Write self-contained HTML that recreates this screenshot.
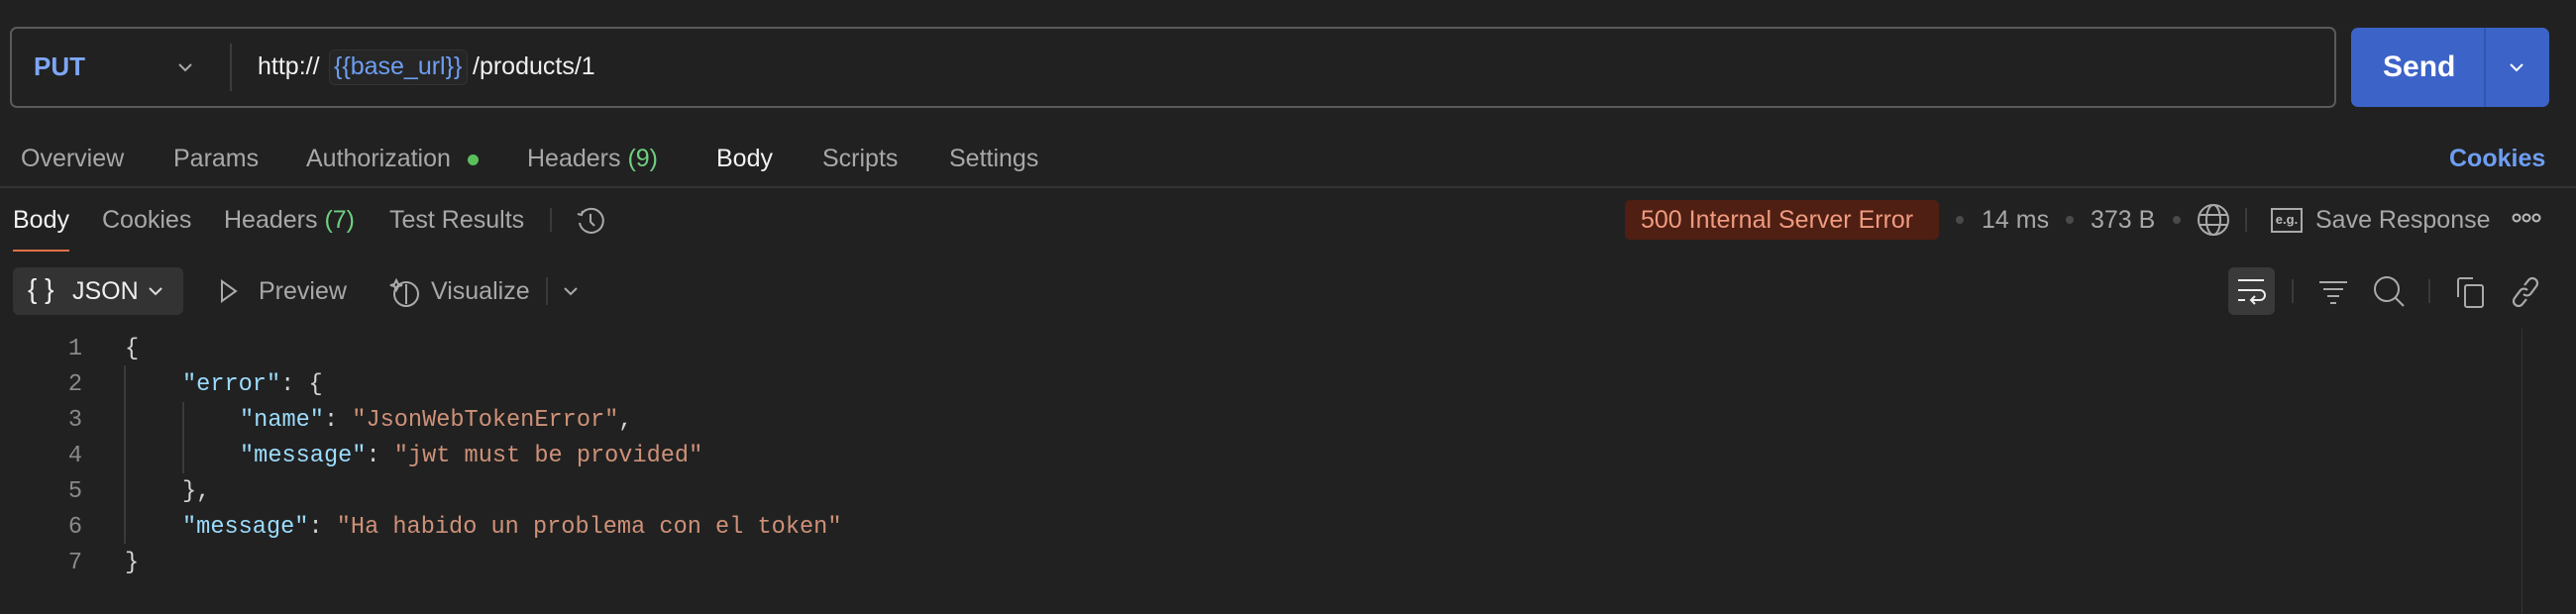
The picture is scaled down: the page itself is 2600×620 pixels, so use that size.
<!DOCTYPE html>
<html><head><meta charset="utf-8"><style>
*{margin:0;padding:0;box-sizing:border-box}
body{width:2600px;height:620px;background:#212121;position:relative;overflow:hidden;font-family:"Liberation Sans",sans-serif;color:#a8a8a8}
.a{position:absolute;white-space:nowrap}
.t{font-size:25px;line-height:30px}
.mono{font-family:"Liberation Mono",monospace;font-size:23.6px;line-height:36px}
.k{color:#9cdcfe}.s{color:#ce9178}.p{color:#d4d4d4}
.ln{color:#8a8a8a;width:30px;text-align:right;left:53px}
svg{position:absolute}
</style></head><body>
<div class="a" style="left:10px;top:27px;width:2348px;height:82px;border:2px solid #5a5a5a;border-radius:7px"></div>
<div class="a" style="left:34px;top:52px;font-size:26px;font-weight:bold;color:#7ea6f5">PUT</div>
<svg style="left:178px;top:62px" width="18" height="12" viewBox="0 0 18 12"><path d="M3 3l6 6 6-6" stroke="#aaa" stroke-width="2" fill="none"/></svg>
<div class="a" style="left:232px;top:44px;width:2px;height:48px;background:#3c3c3c"></div>
<div class="a" style="left:260px;top:53px;font-size:25px;color:#f0f0f0">http://</div>
<div class="a" style="left:332px;top:50px;width:140px;height:36px;background:#262626;border:1px solid #333;border-radius:6px"></div>
<div class="a" style="left:337px;top:53px;font-size:25px;color:#6e9ef2">{{base_url}}</div>
<div class="a" style="left:477px;top:53px;font-size:25px;color:#f0f0f0">/products/1</div>
<div class="a" style="left:2373px;top:28px;width:200px;height:80px;background:#3c63c8;border-radius:7px"></div>
<div class="a" style="left:2507px;top:28px;width:2px;height:80px;background:#3055b0"></div>
<div class="a" style="left:2405px;top:51px;font-size:30px;font-weight:bold;color:#fff">Send</div>
<svg style="left:2531px;top:62px" width="18" height="12" viewBox="0 0 18 12"><path d="M3 3l6 6 6-6" stroke="#fff" stroke-width="2" fill="none"/></svg>
<div class="a t" style="left:21px;top:145px">Overview</div>
<div class="a t" style="left:175px;top:145px">Params</div>
<div class="a t" style="left:309px;top:145px">Authorization</div>
<div class="a" style="left:472px;top:156px;width:11px;height:11px;border-radius:50%;background:#5bbf5b"></div>
<div class="a t" style="left:532px;top:145px">Headers <span style="color:#6fcf7f">(9)</span></div>
<div class="a t" style="left:723px;top:145px;color:#f2f2f2">Body</div>
<div class="a t" style="left:830px;top:145px">Scripts</div>
<div class="a t" style="left:958px;top:145px">Settings</div>
<div class="a t" style="left:2472px;top:145px;color:#6e9ef2;font-weight:bold">Cookies</div>
<div class="a" style="left:0;top:188px;width:2600px;height:2px;background:#333"></div>
<div class="a t" style="left:13px;top:207px;color:#f2f2f2">Body</div>
<div class="a" style="left:13px;top:252px;width:57px;height:2px;background:#e0714a"></div>
<div class="a t" style="left:103px;top:207px">Cookies</div>
<div class="a t" style="left:226px;top:207px">Headers <span style="color:#6fcf7f">(7)</span></div>
<div class="a t" style="left:393px;top:207px">Test Results</div>
<div class="a" style="left:555px;top:210px;width:2px;height:24px;background:#3a3a3a"></div>
<svg style="left:580px;top:207px" width="32" height="32" viewBox="0 0 32 32" fill="none" stroke="#aaa" stroke-width="2"><path d="M7 9A12 12 0 1 1 5 18"/><path d="M3 9l4 1 1-4"/><path d="M16 9v8l4 4"/></svg>
<div class="a" style="left:1640px;top:202px;width:317px;height:40px;background:#4e1f12;border-radius:5px"></div>
<div class="a t" style="left:1656px;top:207px;color:#f09a80">500 Internal Server Error</div>
<div class="a" style="left:1974px;top:218px;width:8px;height:8px;border-radius:50%;background:#4a4a4a"></div>
<div class="a t" style="left:2000px;top:207px">14 ms</div>
<div class="a" style="left:2085px;top:218px;width:8px;height:8px;border-radius:50%;background:#4a4a4a"></div>
<div class="a t" style="left:2110px;top:207px">373 B</div>
<div class="a" style="left:2193px;top:218px;width:8px;height:8px;border-radius:50%;background:#4a4a4a"></div>
<svg style="left:2217px;top:205px" width="34" height="34" viewBox="0 0 34 34" fill="none" stroke="#aaa" stroke-width="2"><circle cx="17" cy="17" r="15"/><ellipse cx="17" cy="17" rx="7" ry="15"/><path d="M3 12h28M3 22h28"/></svg>
<div class="a" style="left:2266px;top:210px;width:2px;height:24px;background:#3a3a3a"></div>
<div class="a" style="left:2292px;top:210px;width:32px;height:25px;border:2px solid #aaa;font-size:13px;font-weight:bold;color:#bbb;text-align:center;line-height:20px">e.g.</div>
<div class="a t" style="left:2337px;top:207px">Save Response</div>
<svg style="left:2535px;top:214px" width="30" height="12" viewBox="0 0 30 12" fill="none" stroke="#bbb" stroke-width="2"><circle cx="5" cy="6" r="3.5"/><circle cx="15" cy="6" r="3.5"/><circle cx="25" cy="6" r="3.5"/></svg>
<div class="a" style="left:13px;top:270px;width:172px;height:48px;background:#333;border-radius:6px"></div>
<div class="a" style="left:28px;top:276px;font-size:28px;color:#eee">{ }</div>
<div class="a t" style="left:73px;top:279px;color:#eee">JSON</div>
<svg style="left:148px;top:288px" width="18" height="12" viewBox="0 0 18 12"><path d="M3 3l6 6 6-6" stroke="#ddd" stroke-width="2" fill="none"/></svg>
<svg style="left:221px;top:281px" width="20" height="26" viewBox="0 0 20 26"><path d="M3 3l14 10L3 23z" stroke="#aaa" stroke-width="2" fill="none"/></svg>
<div class="a t" style="left:261px;top:279px">Preview</div>
<svg style="left:392px;top:279px" width="32" height="32" viewBox="0 0 32 32" fill="none" stroke="#aaa" stroke-width="2"><circle cx="18" cy="18" r="12"/><path d="M18 8v20M8 4l2 4 4 1-4 1-2 4-2-4-4-1 4-1z"/></svg>
<div class="a t" style="left:435px;top:279px">Visualize</div>
<div class="a" style="left:551px;top:280px;width:2px;height:28px;background:#3a3a3a"></div>
<svg style="left:567px;top:288px" width="18" height="12" viewBox="0 0 18 12"><path d="M3 3l6 6 6-6" stroke="#aaa" stroke-width="2" fill="none"/></svg>
<div class="a" style="left:2249px;top:270px;width:47px;height:48px;background:#3a3a3a;border-radius:6px"></div>
<svg style="left:2257px;top:280px" width="32" height="30" viewBox="0 0 32 30" fill="none" stroke="#eee" stroke-width="2"><path d="M2 3h26M2 13h22a5 5 0 0 1 0 10h-9M19 19l-4 4 4 4M2 23h7"/></svg>
<div class="a" style="left:2313px;top:282px;width:2px;height:24px;background:#3a3a3a"></div>
<svg style="left:2340px;top:282px" width="30" height="26" viewBox="0 0 30 26" fill="none" stroke="#aaa" stroke-width="2"><path d="M1 3h28M5 10h20M9 17h12M12 24h6"/></svg>
<svg style="left:2395px;top:278px" width="34" height="34" viewBox="0 0 34 34" fill="none" stroke="#aaa" stroke-width="2"><circle cx="14" cy="14" r="12"/><path d="M23 23l8 8"/></svg>
<div class="a" style="left:2451px;top:282px;width:2px;height:24px;background:#3a3a3a"></div>
<svg style="left:2478px;top:278px" width="32" height="34" viewBox="0 0 32 34" fill="none" stroke="#aaa" stroke-width="2"><path d="M3 22V5a2 2 0 0 1 2-2h13"/><rect x="10" y="10" width="18" height="22" rx="2"/></svg>
<svg style="left:2533px;top:278px" width="32" height="34" viewBox="0 0 32 34" fill="none" stroke="#aaa" stroke-width="2.2"><path d="M15 10l4-5a5 5 0 0 1 8 6l-6 8a5 5 0 0 1-7 0M17 24l-4 5a5 5 0 0 1-8-6l6-8a5 5 0 0 1 7 0"/></svg>
<div class="a" style="left:125px;top:369px;width:2px;height:180px;background:#3a3a3a"></div>
<div class="a" style="left:184px;top:406px;width:2px;height:72px;background:#3a3a3a"></div>
<div class="a" style="left:2545px;top:332px;width:1px;height:288px;background:#333"></div>
<div class="a mono ln" style="top:335px">1</div>
<div class="a mono ln" style="top:371px">2</div>
<div class="a mono ln" style="top:407px">3</div>
<div class="a mono ln" style="top:443px">4</div>
<div class="a mono ln" style="top:479px">5</div>
<div class="a mono ln" style="top:515px">6</div>
<div class="a mono ln" style="top:551px">7</div>
<div class="a mono p" style="left:126px;top:335px">{</div>
<div class="a mono p" style="left:184px;top:371px"><span class="k">"error"</span>: {</div>
<div class="a mono p" style="left:242px;top:407px"><span class="k">"name"</span>: <span class="s">"JsonWebTokenError"</span>,</div>
<div class="a mono p" style="left:242px;top:443px"><span class="k">"message"</span>: <span class="s">"jwt must be provided"</span></div>
<div class="a mono p" style="left:184px;top:479px">},</div>
<div class="a mono p" style="left:184px;top:515px"><span class="k">"message"</span>: <span class="s">"Ha habido un problema con el token"</span></div>
<div class="a mono p" style="left:126px;top:551px">}</div>
</body></html>
